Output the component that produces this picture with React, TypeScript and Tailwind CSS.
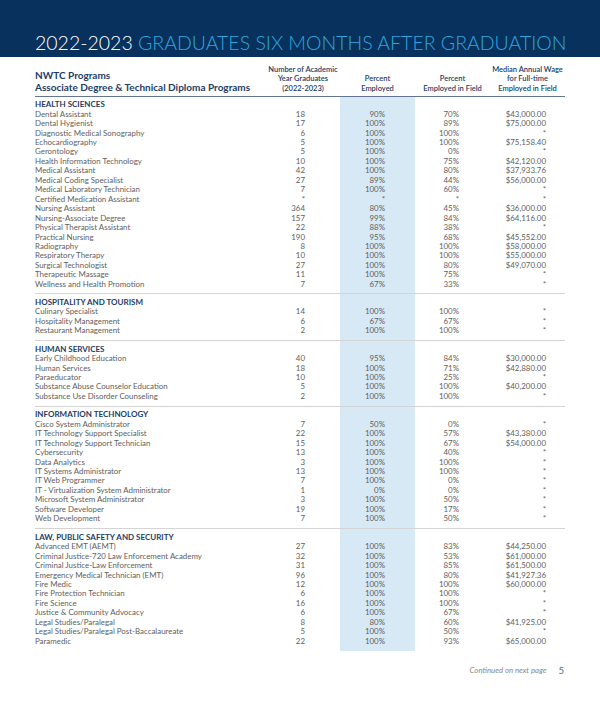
import React from "react";

type Row = [string, string, string, string, string];

const sections: { title: string; rows: Row[] }[] = [
  {
    title: "HEALTH SCIENCES",
    rows: [
      ["Dental Assistant", "18", "90%", "70%", "$43,000.00"],
      ["Dental Hygienist", "17", "100%", "89%", "$75,000.00"],
      ["Diagnostic Medical Sonography", "6", "100%", "100%", "*"],
      ["Echocardiography", "5", "100%", "100%", "$75,158.40"],
      ["Gerontology", "5", "100%", "0%", "*"],
      ["Health Information Technology", "10", "100%", "75%", "$42,120.00"],
      ["Medical Assistant", "42", "100%", "80%", "$37,933.76"],
      ["Medical Coding Specialist", "27", "89%", "44%", "$56,000.00"],
      ["Medical Laboratory Technician", "7", "100%", "60%", "*"],
      ["Certified Medication Assistant", "*", "*", "*", "*"],
      ["Nursing Assistant", "364", "80%", "45%", "$36,000.00"],
      ["Nursing-Associate Degree", "157", "99%", "84%", "$64,116.00"],
      ["Physical Therapist Assistant", "22", "88%", "38%", "*"],
      ["Practical Nursing", "190", "95%", "68%", "$45,552.00"],
      ["Radiography", "8", "100%", "100%", "$58,000.00"],
      ["Respiratory Therapy", "10", "100%", "100%", "$55,000.00"],
      ["Surgical Technologist", "27", "100%", "80%", "$49,070.00"],
      ["Therapeutic Massage", "11", "100%", "75%", "*"],
      ["Wellness and Health Promotion", "7", "67%", "33%", "*"],
    ],
  },
  {
    title: "HOSPITALITY AND TOURISM",
    rows: [
      ["Culinary Specialist", "14", "100%", "100%", "*"],
      ["Hospitality Management", "6", "67%", "67%", "*"],
      ["Restaurant Management", "2", "100%", "100%", "*"],
    ],
  },
  {
    title: "HUMAN SERVICES",
    rows: [
      ["Early Childhood Education", "40", "95%", "84%", "$30,000.00"],
      ["Human Services", "18", "100%", "71%", "$42,880.00"],
      ["Paraeducator", "10", "100%", "25%", "*"],
      ["Substance Abuse Counselor Education", "5", "100%", "100%", "$40,200.00"],
      ["Substance Use Disorder Counseling", "2", "100%", "100%", "*"],
    ],
  },
  {
    title: "INFORMATION TECHNOLOGY",
    rows: [
      ["Cisco System Administrator", "7", "50%", "0%", "*"],
      ["IT Technology Support Specialist", "22", "100%", "57%", "$43,380.00"],
      ["IT Technology Support Technician", "15", "100%", "67%", "$54,000.00"],
      ["Cybersecurity", "13", "100%", "40%", "*"],
      ["Data Analytics", "3", "100%", "100%", "*"],
      ["IT Systems Administrator", "13", "100%", "100%", "*"],
      ["IT Web Programmer", "7", "100%", "0%", "*"],
      ["IT - Virtualization System Administrator", "1", "0%", "0%", "*"],
      ["Microsoft System Administrator", "3", "100%", "50%", "*"],
      ["Software Developer", "19", "100%", "17%", "*"],
      ["Web Development", "7", "100%", "50%", "*"],
    ],
  },
  {
    title: "LAW, PUBLIC SAFETY AND SECURITY",
    rows: [
      ["Advanced EMT (AEMT)", "27", "100%", "83%", "$44,250.00"],
      ["Criminal Justice-720 Law Enforcement Academy", "32", "100%", "53%", "$61,000.00"],
      ["Criminal Justice-Law Enforcement", "31", "100%", "85%", "$61,500.00"],
      ["Emergency Medical Technician (EMT)", "96", "100%", "80%", "$41,927.36"],
      ["Fire Medic", "12", "100%", "100%", "$60,000.00"],
      ["Fire Protection Technician", "6", "100%", "100%", "*"],
      ["Fire Science", "16", "100%", "100%", "*"],
      ["Justice & Community Advocacy", "6", "100%", "67%", "*"],
      ["Legal Studies/Paralegal", "8", "80%", "60%", "$41,925.00"],
      ["Legal Studies/Paralegal Post-Baccalaureate", "5", "100%", "50%", "*"],
      ["Paramedic", "22", "100%", "93%", "$65,000.00"],
    ],
  },
];

const cols = "grid grid-cols-[231px_74px_75px_75px_75px]";

export default function App() {
  return (
    <div className="w-[600px] h-[706px] bg-white font-['Lato',sans-serif] overflow-hidden">
      <div className="h-[57px] bg-[#08325d] flex items-end px-[35px] pb-[2px]">
        <h1 className="text-[19.5px] leading-[24px] font-light text-[#33a5dd] whitespace-nowrap">
          <span className="text-white">2022-2023</span> GRADUATES SIX MONTHS AFTER GRADUATION
        </h1>
      </div>

      <div className="mx-[35px] w-[530px]">
        <div className={`${cols} items-end pt-[8px] pb-[3px] border-b border-[#62778f] text-[#1d3c64]`}>
          <div className="text-[10px] leading-[11.5px] font-bold whitespace-nowrap">
            <div>NWTC Programs</div>
            <div>Associate Degree &amp; Technical Diploma Programs</div>
          </div>
          <div className="text-center text-[7.5px] leading-[9.4px] font-semibold">
            <div>Number of Academic</div>
            <div>Year Graduates</div>
            <div>(2022-2023)</div>
          </div>
          <div className="text-center text-[7.5px] leading-[9.4px] font-semibold">
            <div>Percent</div>
            <div>Employed</div>
          </div>
          <div className="text-center text-[7.5px] leading-[9.4px] font-semibold">
            <div>Percent</div>
            <div>Employed in Field</div>
          </div>
          <div className="text-center text-[7.5px] leading-[9.4px] font-semibold">
            <div>Median Annual Wage</div>
            <div>for Full-time</div>
            <div>Employed in Field</div>
          </div>
        </div>

        <div className="bg-[linear-gradient(to_right,transparent_305px,#d8e9f6_305px,#d8e9f6_380px,transparent_380px)]">
          {sections.map((s, i) => (
            <div
              key={s.title}
              className={i === 0 ? "pt-[3px] pb-[4px]" : "pt-[3.5px] pb-[4.5px] border-t border-[#d4d4d4]"}
            >
              <div className="text-[8px] leading-[9.45px] font-bold text-[#1d3c64]">{s.title}</div>
              {s.rows.map((r) => (
                <div key={r[0]} className={`${cols} text-[7.9px] leading-[9.45px] text-[#5e5e5e]`}>
                  <div className="whitespace-nowrap">{r[0]}</div>
                  <div className="text-right pr-[35px]">{r[1]}</div>
                  <div className="text-right pr-[30px]">{r[2]}</div>
                  <div className="text-right pr-[31px]">{r[3]}</div>
                  <div className="text-right pr-[19px]">{r[4]}</div>
                </div>
              ))}
            </div>
          ))}
        </div>

        <div className="flex justify-end items-center gap-[12px] pt-[13px] pr-[1px]">
          <span className="text-[7.8px] italic text-[#8a8a8a]">Continued on next page</span>
          <span className="text-[9.5px] text-[#3a6ea5]">5</span>
        </div>
      </div>
    </div>
  );
}
